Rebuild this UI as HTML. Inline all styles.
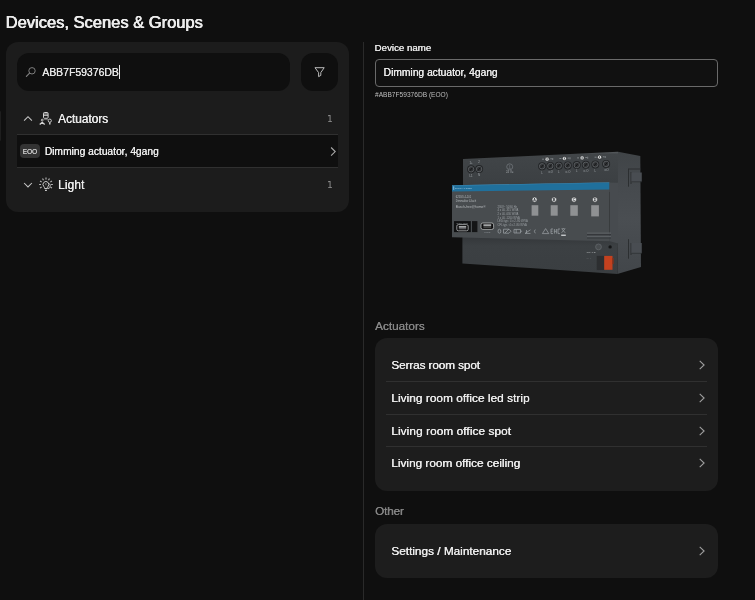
<!DOCTYPE html>
<html lang="en">
<head>
<meta charset="utf-8">
<title>Devices, Scenes &amp; Groups</title>
<style>
*{box-sizing:border-box;margin:0;padding:0}
html,body{width:755px;height:600px;overflow:hidden;background:#0f0f0f;color:#f2f2f2;
  font-family:"Liberation Sans","DejaVu Sans",sans-serif;}
body{position:relative}
#root{position:absolute;left:0;top:0;width:755px;height:600px;will-change:transform;transform:translateZ(0)}
.abs{position:absolute}
.med{text-shadow:0.30px 0 0 currentColor;}
h1{position:absolute;left:5.5px;top:12px;font-size:16.5px;line-height:20px;font-weight:normal;text-shadow:0.62px 0 0 currentColor,0 0.2px 0 currentColor;color:#ececec;letter-spacing:0px;white-space:nowrap}
.edge{position:absolute;left:0;top:111px;width:1.3px;height:30px;background:#1e1e1e;border-radius:0 2px 2px 0}
.panel{position:absolute;left:6.2px;top:42px;width:343.2px;height:169.7px;background:#1c1c1c;border-radius:12px}
.search{position:absolute;left:17.2px;top:53px;width:272.4px;height:38px;background:#0f0f0f;border-radius:12px}
.search .txt{text-shadow:0.25px 0 0 currentColor;position:absolute;left:25px;top:12px;font-size:10.45px;line-height:16px;color:#e6e6e6;white-space:nowrap}
.caret{position:absolute;left:102px;top:12px;width:1px;height:14px;background:#e6e6e6}
.filter{position:absolute;left:300.6px;top:53px;width:37.9px;height:38px;background:#0f0f0f;border-radius:12px}
.row{position:absolute;left:17px;width:321px}
.grp{text-shadow:0.35px 0 0 currentColor;font-size:11.85px;line-height:16px;color:#ececec;white-space:nowrap}
.cnt{position:absolute;font-family:"DejaVu Sans","Liberation Sans",sans-serif;font-size:9.2px;line-height:12px;color:#8e8e8e}
.line{position:absolute;background:#303030;height:1px}
.sel{position:absolute;left:17px;top:135px;width:321px;height:32px;background:#0f0f0f}
.badge{position:absolute;left:2.8px;top:9px;width:20.1px;height:13.9px;border-radius:4px;background:#333333;color:#cfcfcf;font-size:6.4px;line-height:15.6px;text-align:center;font-weight:normal;text-shadow:0.2px 0 0 currentColor;letter-spacing:0}
.sel .txt{text-shadow:0.25px 0 0 currentColor;position:absolute;left:27.7px;top:9px;font-size:10.25px;line-height:16px;color:#ececec;white-space:nowrap}
.vline{position:absolute;left:363px;top:42px;width:1px;height:558px;background:#2a2a2a}
.lbl{text-shadow:0.35px 0 0 currentColor;position:absolute;left:374.5px;font-size:9.7px;line-height:14px;color:#e6e6e6;white-space:nowrap}
.input{position:absolute;left:375px;top:59px;width:343px;height:28px;border:1px solid #6a6a6a;border-radius:4px;background:#111}
.input span{text-shadow:0.25px 0 0 currentColor;position:absolute;left:7.6px;top:6px;font-size:10.25px;line-height:14px;color:#ececec;white-space:nowrap}
.serial{position:absolute;left:375px;top:90px;font-size:6.6px;line-height:9px;color:#bebebe;white-space:nowrap}
.sec{text-shadow:0.3px 0 0 currentColor;position:absolute;left:375px;font-size:11.75px;line-height:14px;color:#868686;white-space:nowrap}
.card{position:absolute;left:375px;width:343px;background:#1d1d1d;border-radius:12px}
.item{text-shadow:0.33px 0 0 currentColor;position:absolute;left:391.2px;font-size:11.8px;line-height:16px;color:#ececec;white-space:nowrap}
.cl{position:absolute;left:385.7px;width:321.6px;height:1px;background:#303030}
.chev{position:absolute}
</style>
</head>
<body>
<div id="root">
<h1>Devices, Scenes &amp; Groups</h1>
<div class="edge"></div>
<div class="panel"></div>
<div class="search">
  <svg class="abs" style="left:8px;top:13px" width="12" height="12" viewBox="0 0 12 12"><circle cx="7" cy="4.8" r="3.2" fill="none" stroke="#7e7e7e" stroke-width="1"/><path d="M4.6 7.2 L1.4 10.4" stroke="#7e7e7e" stroke-width="1.2" stroke-linecap="round"/></svg>
  <span class="txt">ABB7F59376DB</span>
  <div class="caret"></div>
</div>
<div class="filter">
  <svg class="abs" style="left:9.4px;top:9px" width="20" height="20" viewBox="310 62 20 20"><path d="M315 67.7H324.2L320.8 72.6V75.4L318.6 76.6V72.6Z" fill="none" stroke="#c4c4c4" stroke-width="0.95" stroke-linejoin="round"/></svg>
</div>

<!-- Actuators group -->
<svg class="abs" style="left:22px;top:114px" width="12" height="9" viewBox="22 114 12 9"><path d="M24.1 120.6 L28 116.7 L31.9 120.6" fill="none" stroke="#c6c6c6" stroke-width="1.05"/></svg>
<svg class="abs" style="left:36px;top:108px" width="20" height="20" viewBox="36 108 20 20" fill="none" stroke="#d4d4d4">
  <rect x="43.5" y="112.5" width="4.6" height="5.8" rx="0.9" stroke-width="1"/>
  <path d="M43.5 114H48 M43.5 115.4H48" stroke-width="0.9"/>
  <path d="M45.8 118.4V119.6M45.8 119.6H43.6M45.8 119.6H48" stroke-width="0.7" stroke="#8a8a8a"/>
  <circle cx="42.2" cy="120.1" r="0.9" stroke-width="0.9"/>
  <path d="M39.7 124.5L42.2 122.3L44.7 124.5" stroke-width="1.3"/>
  <circle cx="49.8" cy="120.7" r="1.6" stroke-width="0.9"/>
  <path d="M49.8 122.4V124.6" stroke-width="1.4"/>
</svg>
<div class="grp abs" style="left:58px;top:111px">Actuators</div>
<div class="cnt" style="left:327px;top:113px">1</div>
<div class="line" style="left:17px;top:134px;width:321px"></div>
<div class="sel">
  <div class="badge">EOO</div>
  <span class="txt">Dimming actuator, 4gang</span>
  <svg class="abs" style="left:309px;top:8px" width="12" height="16" viewBox="326 143 12 16"><path d="M331.1 147.5L335.2 151.55L331.1 155.6" fill="none" stroke="#aaaaaa" stroke-width="1.1"/></svg>
</div>
<div class="line" style="left:17px;top:167px;width:321px"></div>
<!-- Light group -->
<svg class="abs" style="left:22px;top:180px" width="12" height="10" viewBox="22 180 12 10"><path d="M24.1 183 L28 186.9 L31.9 183" fill="none" stroke="#c6c6c6" stroke-width="1.05"/></svg>
<svg class="abs" style="left:36.5px;top:174.2px" width="20" height="20" viewBox="36 174 20 20" fill="none" stroke="#c8c8c8">
  <path d="M40.67 187.00L39.02 187.95M40.00 184.50L38.10 184.50M40.67 182.00L39.02 181.05M42.50 180.17L41.55 178.52M45.00 179.50L45.00 177.60M47.50 180.17L48.45 178.52M49.33 182.00L50.98 181.05M50.00 184.50L51.90 184.50M49.33 187.00L50.98 187.95" stroke-width="1.15" stroke="#b4b4b4"/>
  <path d="M43.6 188.5 c0-1-.3-1.5-.9-2.2 a2.9 2.9 0 1 1 4.4 0 c-.6.7-.9 1.2-.9 2.2 z" stroke-width="1"/>
  <path d="M44 190.3h1.9" stroke-width="1.2"/>
  <path d="M47.3 183.4 c1.2.1 2 .9 2 2 c0 .8-.4 1.3-.8 1.8 c-.3.4-.4.7-.4 1.2 h-1.7" stroke-width="0.9"/>
  <path d="M44.9 183v2.2" stroke-width="0.8" stroke="#9a9a9a"/>
</svg>
<div class="grp abs" style="left:58px;top:177px;letter-spacing:0.15px">Light</div>
<div class="cnt" style="left:327px;top:179px">1</div>

<div class="vline"></div>

<!-- Right -->
<div class="lbl" style="top:41px">Device name</div>
<div class="input"><span>Dimming actuator, 4gang</span></div>
<div class="serial">#ABB7F59376DB (EOO)</div>

<!-- device image -->
<svg class="abs" style="left:440px;top:140px;filter:blur(0.3px)" width="215" height="145" viewBox="440 140 215 145">
  <defs>
    <linearGradient id="gUp" x1="0" y1="0" x2="0" y2="1"><stop offset="0" stop-color="#5a5e61"/><stop offset="0.06" stop-color="#414548"/><stop offset="0.75" stop-color="#3c4043"/><stop offset="1" stop-color="#35383b"/></linearGradient>
    <linearGradient id="gLow" x1="0" y1="0" x2="0" y2="1"><stop offset="0" stop-color="#313437"/><stop offset="0.3" stop-color="#3c4043"/><stop offset="1" stop-color="#3a3e41"/></linearGradient>
    <linearGradient id="gSide" x1="0" y1="0" x2="0" y2="1"><stop offset="0" stop-color="#404447"/><stop offset="0.3" stop-color="#464a4e"/><stop offset="0.55" stop-color="#4a4e52"/><stop offset="1" stop-color="#42464a"/></linearGradient>
  </defs>
  <!-- right side face -->
  <polygon points="618,151.7 640.3,156.1 641,267 617.3,274" fill="url(#gSide)"/>
  <path d="M628.5 168.6 V186.7 M628.5 169 H640.5 M631 172 V184" stroke="#2c2f31" stroke-width="1" fill="none"/>
  <rect x="631.5" y="172.5" width="10.3" height="9" fill="#494d52"/><path d="M631.5 181.8H641.8" stroke="#2f3235" stroke-width="0.8"/>
  <path d="M628.5 239.2 V258.7 M631 243 V255" stroke="#2c2f31" stroke-width="1" fill="none"/>
  <rect x="631.5" y="243" width="10.3" height="10" fill="#494d52"/><path d="M631.5 253.3H641.8" stroke="#2f3235" stroke-width="0.8"/>
  <!-- upper block -->
  <polygon points="463,159 618,151.7 618,192 463,192" fill="url(#gUp)"/>
  <!-- lower block -->
  <polygon points="462.4,234 618,234 617.3,274 545,269.1 462.4,263.5" fill="url(#gLow)"/>
  <!-- main panel side -->
  <polygon points="609.3,182.5 618,182.8 618,243.4 609.7,241.3" fill="#474b4f"/>
  <!-- main panel front -->
  <polygon points="452,186 452.8,185.3 609.3,182.5 609.7,241.3 452,237.3" fill="#484c4f"/>
  <!-- blue strip -->
  <polygon points="452,185.3 609.3,182.5 609.3,189.4 452,191.6" fill="#20709c"/>
  <polygon points="452,185.2 609.3,182.2 609.3,182.8 452,185.8" fill="#4d9ac4" opacity=".6"/>
  <rect x="453.2" y="186.3" width="1" height="3.6" fill="#9cc6e2" opacity=".8"/>
  <text x="455" y="189.3" font-family="Liberation Sans, sans-serif" font-size="2.2" fill="#b9d6ea" opacity=".8">BUSCH-JAEGER</text>
  <!-- grooves -->
  <path d="M587 233.2H611M587 236.6H611" stroke="#5a5e62" stroke-width="1.3"/><path d="M587 234.6H611M587 238H611" stroke="#33363a" stroke-width="1"/>
  <!-- screws -->
  <g>
    <circle cx="471.1" cy="169.3" r="4" fill="#232527"/><circle cx="471.1" cy="169.3" r="2.7" fill="#2f3133" stroke="#62666a" stroke-width="0.8"/><path d="M469.8 170.9L472.4 167.7" stroke="#17181a" stroke-width="1"/>
    <circle cx="479.1" cy="169.1" r="4" fill="#232527"/><circle cx="479.1" cy="169.1" r="2.7" fill="#2f3133" stroke="#62666a" stroke-width="0.8"/><path d="M477.8 170.7L480.4 167.5" stroke="#17181a" stroke-width="1"/>
    <circle cx="542.1" cy="166.3" r="4" fill="#232527"/><circle cx="542.1" cy="166.3" r="2.7" fill="#2f3133" stroke="#62666a" stroke-width="0.8"/><path d="M540.8 167.9L543.4 164.7" stroke="#17181a" stroke-width="1"/>
    <circle cx="550.3" cy="166.0" r="4" fill="#232527"/><circle cx="550.3" cy="166.0" r="2.7" fill="#2f3133" stroke="#62666a" stroke-width="0.8"/><path d="M549.0 167.6L551.6 164.4" stroke="#17181a" stroke-width="1"/>
    <circle cx="558.8" cy="165.7" r="4" fill="#232527"/><circle cx="558.8" cy="165.7" r="2.7" fill="#2f3133" stroke="#62666a" stroke-width="0.8"/><path d="M557.5 167.3L560.1 164.1" stroke="#17181a" stroke-width="1"/>
    <circle cx="567.8" cy="165.4" r="4" fill="#232527"/><circle cx="567.8" cy="165.4" r="2.7" fill="#2f3133" stroke="#62666a" stroke-width="0.8"/><path d="M566.5 167.0L569.1 163.8" stroke="#17181a" stroke-width="1"/>
    <circle cx="576.8" cy="165.1" r="4" fill="#232527"/><circle cx="576.8" cy="165.1" r="2.7" fill="#2f3133" stroke="#62666a" stroke-width="0.8"/><path d="M575.5 166.7L578.1 163.5" stroke="#17181a" stroke-width="1"/>
    <circle cx="585.8" cy="164.8" r="4" fill="#232527"/><circle cx="585.8" cy="164.8" r="2.7" fill="#2f3133" stroke="#62666a" stroke-width="0.8"/><path d="M584.5 166.4L587.1 163.2" stroke="#17181a" stroke-width="1"/>
    <circle cx="595.3" cy="164.4" r="4" fill="#232527"/><circle cx="595.3" cy="164.4" r="2.7" fill="#2f3133" stroke="#62666a" stroke-width="0.8"/><path d="M594.0 166.0L596.6 162.8" stroke="#17181a" stroke-width="1"/>
    <circle cx="606.1" cy="163.9" r="4" fill="#232527"/><circle cx="606.1" cy="163.9" r="2.7" fill="#2f3133" stroke="#62666a" stroke-width="0.8"/><path d="M604.8 165.5L607.4 162.3" stroke="#17181a" stroke-width="1"/>
  </g>
  <circle cx="509.7" cy="166.8" r="3" fill="none" stroke="#70757a" stroke-width="0.8"/>
  <path d="M509.7 164.8 v3 M508.5 168.4 h2.4" stroke="#70757a" stroke-width="0.6"/>
  <g font-family="Liberation Sans, sans-serif" font-size="2.8" fill="#a4a9ad" text-anchor="middle">
    <text x="471" y="163.6">1+</text><text x="479" y="163.4">2</text>
    <text x="471" y="176.6">L1</text><text x="479" y="176.3">N</text>
    <text x="509.7" y="172.6">24 V=</text>
    <text x="542.1" y="173.5">L</text><text x="550.3" y="173.2">⇒O</text><text x="558.8" y="172.9">L</text><text x="567.8" y="172.6">⇒O</text><text x="576.8" y="172.3">L</text><text x="585.8" y="172.0">⇒O</text><text x="595.3" y="171.6">L</text><text x="606.1" y="171.1">⇒O</text>
  </g>
  <g>
    <circle cx="547.1" cy="159.2" r="2.1" fill="#e4e6e7" stroke="#26282a" stroke-width="0.7"/><path d="M547.1 158.1v2.2" stroke="#3a3d40" stroke-width="0.8"/><path d="M542.1 159.2h2M550.3 158.8h1.6M552.7 158.0v2" stroke="#a9aeb2" stroke-width="0.6"/>
    <circle cx="564.4" cy="158.5" r="2.1" fill="#e4e6e7" stroke="#26282a" stroke-width="0.7"/><path d="M564.4 157.4v2.2" stroke="#3a3d40" stroke-width="0.8"/><path d="M559.4 158.5h2M567.6 158.1h1.6M570.0 157.3v2" stroke="#a9aeb2" stroke-width="0.6"/>
    <circle cx="582.1" cy="157.9" r="2.1" fill="#e4e6e7" stroke="#26282a" stroke-width="0.7"/><path d="M582.1 156.8v2.2" stroke="#3a3d40" stroke-width="0.8"/><path d="M577.1 157.9h2M585.3 157.5h1.6M587.7 156.7v2" stroke="#a9aeb2" stroke-width="0.6"/>
    <circle cx="599.6" cy="157.2" r="2.1" fill="#e4e6e7" stroke="#26282a" stroke-width="0.7"/><path d="M599.6 156.1v2.2" stroke="#3a3d40" stroke-width="0.8"/><path d="M594.6 157.2h2M602.8 156.8h1.6M605.2 156.0v2" stroke="#a9aeb2" stroke-width="0.6"/>
  </g>
  <!-- channel labels -->
  <g fill="#e2e4e5" stroke="#2b2d2f" stroke-width="0.6">
    <circle cx="534.6" cy="199.6" r="2.55"/><circle cx="554.1" cy="199.6" r="2.55"/><circle cx="574" cy="199.6" r="2.55"/><circle cx="595" cy="199.6" r="2.55"/>
  </g>
  <g font-family="Liberation Sans, sans-serif" font-size="3.6" font-weight="bold" fill="#34373a" text-anchor="middle">
    <text x="534.6" y="200.9">A</text><text x="554.1" y="200.9">B</text><text x="574" y="200.9">C</text><text x="595" y="200.9">D</text>
  </g>
  <!-- buttons -->
  <g fill="#8f9193">
    <rect x="531.6" y="205.2" width="6.7" height="10.5"/><rect x="550.7" y="205.2" width="7" height="10.5"/><rect x="570.3" y="205.2" width="7.5" height="10.6"/><rect x="591.2" y="205.2" width="7.7" height="11.2"/>
  </g>
  <!-- printed text -->
  <g font-family="Liberation Sans, sans-serif" fill="#b4b8bb">
    <text x="455.8" y="198" font-size="2.6">6253/0.4-101</text>
    <text x="455.8" y="202.4" font-size="2.6">Dimmaktor 4-fach</text>
    <text x="455.8" y="207.6" font-size="3.3">Busch-free@home®</text>
  </g>
  <g font-family="Liberation Sans, sans-serif" fill="#9da2a6" font-size="2.7">
    <text x="497.6" y="207.8">230V~ 50/60 Hz</text>
    <text x="497.6" y="211.4">4 x 40..315 W/VA</text>
    <text x="497.6" y="215">2 x 40..630 W/VA</text>
    <text x="497.6" y="218.6">1 x 40..1260 W/VA</text>
    <text x="497.6" y="222.2">LEDi typ.: 4 x 2..80 W/VA</text>
    <text x="497.6" y="225.8">CFL typ.: 4 x 2..80 W/VA</text>
  </g>
  <!-- black labels -->
  <rect x="454" y="221.1" width="16.8" height="11" fill="#101112"/>
  <rect x="472" y="221.1" width="5.4" height="11" fill="#141516"/>
  <rect x="456.8" y="224.6" width="11.4" height="6.2" rx="1.6" fill="#0c0c0d" stroke="#c8cbcd" stroke-width="0.7"/>
  <rect x="458.8" y="226.2" width="7.4" height="1.4" fill="#c8cbcd"/>
  <rect x="458.8" y="228.4" width="7.4" height="0.8" fill="#c8cbcd" opacity=".7"/>
  <rect x="481" y="223" width="12.6" height="6.4" rx="1.8" fill="#0e0e0f" stroke="#c8cbcd" stroke-width="0.7"/>
  <rect x="483.4" y="224.4" width="7.8" height="1.4" fill="#c8cbcd"/>
  <rect x="483.4" y="226.6" width="7.8" height="0.8" fill="#c8cbcd" opacity=".7"/>
  <text x="487.3" y="232.6" font-family="Liberation Sans, sans-serif" font-size="2" fill="#8d9296" text-anchor="middle">10BFB</text>
  <text x="462.4" y="223.8" font-family="Liberation Sans, sans-serif" font-size="1.9" fill="#8d9296" text-anchor="middle">Busch-Jaeger</text>
  <!-- symbols row -->
  <g fill="none" stroke="#9a9fa3" stroke-width="0.75">
    <ellipse cx="499.4" cy="231.2" rx="1.4" ry="2"/>
    <path d="M503.5 229.2h5.5l2 2-2 2h-5.5z M505 233 l4-4"/>
    <path d="M514 229.4h6.5v3.6H514z M516.2 229.4v3.6 M520.5 231.2h1.6"/>
    <path d="M525 233.4h5.5 M525 233.4 l5.5-3.6 M526.5 230v3"/>
    <path d="M535.6 229.8c-1.6 0-1.6 3.2 0 3.2"/>
    <path d="M545.6 228.6l3.2 5h-6.4z"/>
    <path d="M551 229v4.6 M551 229h2 M551 231.2h1.6 M551 233.6h2 M554.4 229v4.6 M554.4 231.3h2 M556.4 229v4.6 M558 229v4.6 M558 229 h2 M558 233.6h2"/>
    <path d="M561.6 228.6l3.6 4.2 M565.2 228.6l-3.6 4.2 M562.2 228.6h2.4"/>
  </g>
  <rect x="561.2" y="234.6" width="4.6" height="1.3" fill="#d0d3d5"/>
  <!-- prog button, led -->
  <circle cx="598.5" cy="246.9" r="2.9" fill="#484c4f" stroke="#666a6e" stroke-width="0.7"/>
  <circle cx="610.1" cy="246.9" r="1.7" fill="#151617"/>
  <text x="586.6" y="252.6" font-family="Liberation Sans, sans-serif" font-size="2.3" fill="#c0c4c7">TWA 0 E</text>
  <text x="586.6" y="258.6" font-family="Liberation Sans, sans-serif" font-size="2" fill="#5f6467">ID: 1</text>
  <!-- bus connector -->
  <rect x="596.7" y="255.9" width="7.6" height="14.2" fill="#2c2e30"/>
  <rect x="604.2" y="255.9" width="8.3" height="13.9" fill="#c3411f"/>
  <rect x="612.3" y="258" width="1.3" height="6" fill="#8e2f17"/>
</svg>

<div class="sec" style="top:319px">Actuators</div>
<div class="card" style="top:337.8px;height:153px"></div>
<div class="cl" style="top:381.1px"></div>
<div class="cl" style="top:413.7px"></div>
<div class="cl" style="top:446.3px"></div>
<div class="item" style="top:357px;letter-spacing:-0.12px">Serras room spot</div>
<div class="item" style="top:390px;letter-spacing:0.055px">Living room office led strip</div>
<div class="item" style="top:423px;letter-spacing:0.086px">Living room office spot</div>
<div class="item" style="top:455px">Living room office ceiling</div>
<div class="sec" style="top:504px;letter-spacing:-0.15px">Other</div>
<div class="card" style="top:523.6px;height:54.4px"></div>
<div class="item" style="top:543px">Settings / Maintenance</div>
<svg class="abs" style="left:694px;top:357.4px" width="16" height="16" viewBox="0 0 16 16"><path d="M5.7 3.8L10.1 8L5.7 12.2" fill="none" stroke="#9e9e9e" stroke-width="1.1"/></svg>
<svg class="abs" style="left:694px;top:389.9px" width="16" height="16" viewBox="0 0 16 16"><path d="M5.7 3.8L10.1 8L5.7 12.2" fill="none" stroke="#9e9e9e" stroke-width="1.1"/></svg>
<svg class="abs" style="left:694px;top:422.8px" width="16" height="16" viewBox="0 0 16 16"><path d="M5.7 3.8L10.1 8L5.7 12.2" fill="none" stroke="#9e9e9e" stroke-width="1.1"/></svg>
<svg class="abs" style="left:694px;top:455.3px" width="16" height="16" viewBox="0 0 16 16"><path d="M5.7 3.8L10.1 8L5.7 12.2" fill="none" stroke="#9e9e9e" stroke-width="1.1"/></svg>
<svg class="abs" style="left:694px;top:543.0px" width="16" height="16" viewBox="0 0 16 16"><path d="M5.7 3.8L10.1 8L5.7 12.2" fill="none" stroke="#9e9e9e" stroke-width="1.1"/></svg>
</div>
</body>
</html>
